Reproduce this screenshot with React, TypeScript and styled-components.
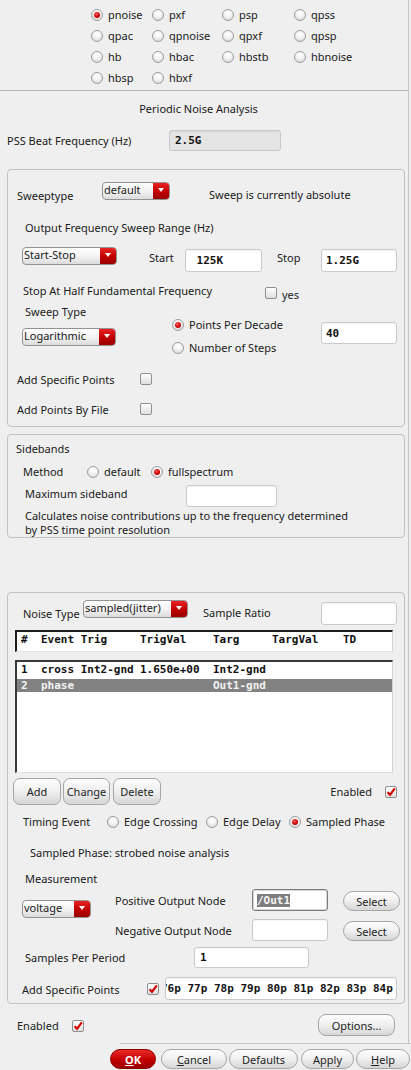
import React from "react";
import styled, { createGlobalStyle, css } from "styled-components";

const Global = createGlobalStyle`
  html, body { margin: 0; padding: 0; background: #efefef; }
  body { font-family: "Noto Sans", "DejaVu Sans", sans-serif; font-size: 11px; color: #202020; }
  * { box-sizing: border-box; }
`;

const Page = styled.div`
  width: 411px;
  height: 1070px;
  overflow: hidden;
  display: flex;
  flex-direction: column;
  background: #efefef;
`;

const Main = styled.div`
  width: 409px;
  height: 1043px;
  flex: none;
  border-right: 1px solid #c4c4c4;
  display: flex;
  flex-direction: column;
`;

const AnalysisGrid = styled.div`
  flex: none;
  height: 91px;
  border-bottom: 1px solid #bababa;
  padding: 4px 0 0 91px;
  display: grid;
  grid-template-columns: 61px 70px 72px auto;
  grid-auto-rows: 21px;
  align-items: center;
`;

const Title = styled.div`
  flex: none;
  margin-top: 10px;
  line-height: 15px;
  text-align: center;
  padding-right: 11px;
`;

const Row = styled.div<{ $mt?: number; $h: number; $pl?: number; $pr?: number; $cols?: string; $rows?: string }>`
  flex: none;
  display: grid;
  grid-template-columns: ${(p) => p.$cols ?? "auto"};
  ${(p) => p.$rows && css`grid-template-rows: ${p.$rows};`}
  align-items: start;
  margin-top: ${(p) => p.$mt ?? 0}px;
  height: ${(p) => p.$h}px;
  padding-left: ${(p) => p.$pl ?? 0}px;
  padding-right: ${(p) => p.$pr ?? 0}px;
`;

const Label = styled.div<{ $mt?: number; $lh?: number }>`
  margin-top: ${(p) => p.$mt ?? 0}px;
  line-height: ${(p) => p.$lh ?? 15}px;
  white-space: nowrap;
`;

const Group = styled.div<{ $mt: number; $h: number }>`
  flex: none;
  margin: ${(p) => p.$mt}px 0 0 7px;
  width: 398px;
  height: ${(p) => p.$h}px;
  border: 1px solid #c2c2c2;
  border-radius: 4px;
  display: flex;
  flex-direction: column;
`;

/* radio */
const RadioItem = styled.div<{ $mt?: number }>`
  display: flex;
  align-items: center;
  gap: 5px;
  height: 15px;
  white-space: nowrap;
  margin-top: ${(p) => p.$mt ?? 0}px;
`;

const RadioDot = styled.span<{ $on?: boolean }>`
  flex: none;
  width: 12px;
  height: 12px;
  border-radius: 50%;
  border: 1px solid #9d9d9d;
  background: radial-gradient(circle at 50% 30%, #ffffff 0%, #f5f5f5 40%, #d2d2d2 100%);
  display: flex;
  align-items: center;
  justify-content: center;
  &::after {
    content: "";
    width: 6px;
    height: 6px;
    border-radius: 50%;
    background: radial-gradient(circle at 40% 35%, #ff6060, #d00000 55%, #a80000);
    display: ${(p) => (p.$on ? "block" : "none")};
  }
`;

const RadioStack = styled.div`
  display: flex;
  flex-direction: column;
  gap: 8px;
`;

function Radio({ label, on, mt }: { label: string; on?: boolean; mt?: number }) {
  return (
    <RadioItem $mt={mt}>
      <RadioDot $on={on} />
      <span>{label}</span>
    </RadioItem>
  );
}

/* checkbox */
const CheckBox = styled.span<{ $mt?: number }>`
  display: block;
  width: 12px;
  height: 12px;
  margin-top: ${(p) => p.$mt ?? 0}px;
  border: 1px solid #8f8f8f;
  border-radius: 2px;
  background: linear-gradient(#ffffff, #dfdfdf);
  svg { display: block; overflow: visible; }
`;

function Check({ on, mt }: { on?: boolean; mt?: number }) {
  return (
    <CheckBox $mt={mt}>
      {on && (
        <svg width="10" height="10" viewBox="0 0 10 10">
          <path d="M1.6 5.2 L4 7.8 L8.8 1.4" fill="none" stroke="#d40000" strokeWidth="2.2" strokeLinejoin="miter" />
        </svg>
      )}
    </CheckBox>
  );
}

/* combo box */
const ComboBox = styled.div<{ $w: number; $mt?: number }>`
  display: flex;
  width: ${(p) => p.$w}px;
  height: 18px;
  margin-top: ${(p) => p.$mt ?? 0}px;
  border: 1px solid #929292;
  border-radius: 4px;
  overflow: hidden;
  background: linear-gradient(#ffffff, #f3f3f3 50%, #dcdcdc);
`;

const ComboText = styled.span`
  flex: 1;
  padding-left: 1px;
  line-height: 14px;
  white-space: nowrap;
  overflow: hidden;
`;

const ComboArrow = styled.span`
  flex: none;
  width: 16px;
  background: linear-gradient(#e82424, #c00000 55%, #980000);
  display: flex;
  align-items: center;
  justify-content: center;
  &::after {
    content: "";
    border-left: 3.5px solid transparent;
    border-right: 3.5px solid transparent;
    border-top: 4px solid #ffffff;
    margin-top: -2px;
  }
`;

function Combo({ text, w, mt }: { text: string; w: number; mt?: number }) {
  return (
    <ComboBox $w={w} $mt={mt}>
      <ComboText>{text}</ComboText>
      <ComboArrow />
    </ComboBox>
  );
}

const SpanRows = styled.div`
  grid-row: 1 / span 2;
`;

/* text field */
const Field = styled.div<{ $w: number; $h: number; $mt?: number; $pl?: number; $state?: "normal" | "disabled" | "focus" }>`
  width: ${(p) => p.$w}px;
  height: ${(p) => p.$h}px;
  margin-top: ${(p) => p.$mt ?? 0}px;
  padding-left: ${(p) => p.$pl ?? 4}px;
  border: 1px solid #c9c9c9;
  border-radius: 3px;
  background: #ffffff;
  box-shadow: inset 0 1px 1px rgba(0, 0, 0, 0.05);
  display: flex;
  align-items: center;
  overflow: hidden;
  white-space: pre;
  font-family: "DejaVu Sans Mono", monospace;
  font-weight: bold;
  font-size: 11px;
  color: #111;
  ${(p) =>
    p.$state === "disabled" &&
    css`
      background: #e4e4e4;
      border-color: #c8c8c8;
    `}
  ${(p) =>
    p.$state === "focus" &&
    css`
      border-color: #7d7d7d;
      box-shadow: inset 0 0 0 1px #d6d6d6;
    `}
`;

const Selected = styled.span`
  background: #7e7e7e;
  color: #f4f4f4;
`;

const Scrolled = styled.span`
  margin-left: -5px;
`;

/* buttons */
const Btn = styled.div<{ $w: number; $h: number; $r: number; $mt?: number; $ml?: number; $primary?: boolean }>`
  flex: none;
  width: ${(p) => p.$w}px;
  height: ${(p) => p.$h}px;
  margin-top: ${(p) => p.$mt ?? 0}px;
  margin-left: ${(p) => p.$ml ?? 0}px;
  border-radius: ${(p) => p.$r}px;
  border: 1px solid #a6a6a6;
  background: linear-gradient(#fdfdfd, #efefef 50%, #d6d6d6);
  display: flex;
  align-items: center;
  justify-content: center;
  white-space: nowrap;
  font-size: 11px;
  color: #1e1e1e;
  u { text-decoration: underline; }
  ${(p) =>
    p.$primary &&
    css`
      border-color: #8c0000;
      background: linear-gradient(#ea2a2a, #c40000 55%, #9c0000);
      color: #ffffff;
      font-weight: bold;
    `}
`;

const ButtonRow = styled.div`
  flex: none;
  display: flex;
  align-items: flex-start;
  gap: 2px;
  margin-top: 5px;
  height: 27px;
  padding: 0 7px 0 5px;
`;

const Trailing = styled.div`
  margin-left: auto;
  align-self: center;
  display: flex;
  align-items: center;
  gap: 13px;
`;

/* event list */
const ListHead = styled.div`
  flex: none;
  margin: 5px 0 0 7px;
  width: 378px;
  height: 22px;
  background: #ffffff;
  border-top: 2px solid #1c1c1c;
  border-left: 2px solid #1c1c1c;
  border-right: 1px solid #d4d4d4;
  border-bottom: 1px solid #e2e2e2;
  padding-top: 1px;
`;

const ListBody = styled.div`
  flex: none;
  margin: 8px 0 0 7px;
  width: 378px;
  height: 113px;
  background: #ffffff;
  border-top: 2px solid #3a3a3a;
  border-left: 2px solid #3a3a3a;
  border-right: 1px solid #d4d4d4;
  border-bottom: 1px solid #e2e2e2;
  padding-top: 1px;
  display: flex;
  flex-direction: column;
  gap: 3px;
`;

const EventRow = styled.div<{ $sel?: boolean }>`
  display: grid;
  grid-template-columns: 20px 99px 73px 59px 71px auto;
  padding-left: 4px;
  height: 13px;
  line-height: 13px;
  white-space: pre;
  font-family: "DejaVu Sans Mono", monospace;
  font-weight: bold;
  font-size: 11px;
  color: #111;
  ${(p) =>
    p.$sel &&
    css`
      background: #828282;
      color: #f2f2f2;
    `}
`;

const BottomBar = styled.div`
  flex: none;
  margin-left: 120px;
  height: 27px;
  border-top: 1px solid #c6c6c6;
`;

const DialogButtons = styled.div`
  display: flex;
  gap: 2px;
  margin: 5px 0 0 -10px;
`;

const EndCell = styled.div`
  justify-self: end;
`;

const analyses: [string, boolean][] = [
  ["pnoise", true], ["pxf", false], ["psp", false], ["qpss", false],
  ["qpac", false], ["qpnoise", false], ["qpxf", false], ["qpsp", false],
  ["hb", false], ["hbac", false], ["hbstb", false], ["hbnoise", false],
  ["hbsp", false], ["hbxf", false],
];

export default function App() {
  return (
    <Page>
      <Global />
      <Main>
        <AnalysisGrid>
          {analyses.map(([n, on]) => (
            <Radio key={n} label={n} on={on} />
          ))}
        </AnalysisGrid>

        <Title>Periodic Noise Analysis</Title>

        <Row $mt={14} $h={21} $pl={7} $cols="162px 112px">
          <Label $mt={3}>PSS Beat Frequency (Hz)</Label>
          <Field $w={112} $h={21} $pl={5} $state="disabled">2.5G</Field>
        </Row>

        <Group $mt={18} $h={258}>
          <Row $mt={12} $h={18} $pl={9} $cols="85px 107px auto">
            <Label $mt={6}>Sweeptype</Label>
            <Combo text="default" w={68} />
            <Label $mt={5}>Sweep is currently absolute</Label>
          </Row>
          <Row $mt={20} $h={15} $pl={17}>
            <Label>Output Frequency Sweep Range (Hz)</Label>
          </Row>
          <Row $mt={12} $h={25} $pl={14} $cols="127px 36px 92px 44px 76px">
            <Combo text="Start-Stop" w={95} />
            <Label $mt={3}>Start</Label>
            <Field $w={77} $h={23} $mt={2}>{" 125K"}</Field>
            <Label $mt={3}>Stop</Label>
            <Field $w={76} $h={23} $mt={2}>1.25G</Field>
          </Row>
          <Row $mt={11} $h={16} $pl={15} $cols="242px 17px auto">
            <Label>Stop At Half Fundamental Frequency</Label>
            <Check mt={4} />
            <Label $mt={4}>yes</Label>
          </Row>
          <Row $mt={5} $h={13} $pl={17}>
            <Label>Sweep Type</Label>
          </Row>
          <Row $h={38} $pl={14} $cols="150px 149px 76px">
            <Combo text="Logarithmic" w={94} mt={11} />
            <RadioStack>
              <Radio label="Points Per Decade" on />
              <Radio label="Number of Steps" />
            </RadioStack>
            <Field $w={76} $h={22} $mt={5}>40</Field>
          </Row>
          <Row $mt={17} $h={15} $pl={9} $cols="123px auto">
            <Label>Add Specific Points</Label>
            <Check mt={1} />
          </Row>
          <Row $mt={15} $h={15} $pl={9} $cols="123px auto">
            <Label>Add Points By File</Label>
            <Check mt={1} />
          </Row>
        </Group>

        <Group $mt={7} $h={104}>
          <Row $mt={6} $h={15} $pl={8}>
            <Label>Sidebands</Label>
          </Row>
          <Row $mt={8} $h={15} $pl={15} $cols="64px 64px auto">
            <Label>Method</Label>
            <Radio label="default" />
            <Radio label="fullspectrum" on />
          </Row>
          <Row $mt={6} $h={22} $pl={17} $cols="161px 91px">
            <Label $mt={1}>Maximum sideband</Label>
            <Field $w={91} $h={22} />
          </Row>
          <Row $mt={2} $h={28} $pl={17}>
            <Label $lh={14}>
              Calculates noise contributions up to the frequency determined
              <br />
              by PSS time point resolution
            </Label>
          </Row>
        </Group>

        <Group $mt={54} $h={412}>
          <Row $mt={7} $h={25} $pl={15} $cols="60px 120px 118px 76px">
            <Label $mt={6}>Noise Type</Label>
            <Combo text="sampled(jitter)" w={105} />
            <Label $mt={5}>Sample Ratio</Label>
            <Field $w={76} $h={23} $mt={2} />
          </Row>
          <ListHead>
            <EventRow>
              <span>#</span>
              <span>Event Trig</span>
              <span>TrigVal</span>
              <span>Targ</span>
              <span>TargVal</span>
              <span>TD</span>
            </EventRow>
          </ListHead>
          <ListBody>
            <EventRow>
              <span>1</span>
              <span>cross Int2-gnd</span>
              <span>1.650e+00</span>
              <span>Int2-gnd</span>
              <span />
              <span />
            </EventRow>
            <EventRow $sel>
              <span>2</span>
              <span>phase</span>
              <span />
              <span>Out1-gnd</span>
              <span />
              <span />
            </EventRow>
          </ListBody>
          <ButtonRow>
            <Btn $w={48} $h={27} $r={7}>Add</Btn>
            <Btn $w={47} $h={27} $r={7}>Change</Btn>
            <Btn $w={48} $h={27} $r={7} $ml={1}>Delete</Btn>
            <Trailing>
              <span>Enabled</span>
              <Check on />
            </Trailing>
          </ButtonRow>
          <Row $mt={9} $h={15} $pl={15} $cols="84px 99px 83px auto">
            <Label>Timing Event</Label>
            <Radio label="Edge Crossing" />
            <Radio label="Edge Delay" />
            <Radio label="Sampled Phase" on />
          </Row>
          <Row $mt={16} $h={15} $pl={22}>
            <Label>Sampled Phase: strobed noise analysis</Label>
          </Row>
          <Row $mt={11} $h={15} $pl={17}>
            <Label>Measurement</Label>
          </Row>
          <Row $mt={3} $h={52} $pl={14} $cols="93px 137px 91px 57px" $rows="30px 22px">
            <SpanRows>
              <Combo text="voltage" w={69} mt={11} />
            </SpanRows>
            <Label $mt={4}>Positive Output Node</Label>
            <Field $w={76} $h={22} $state="focus">
              <Selected>/Out1</Selected>
            </Field>
            <Btn $w={57} $h={20} $r={10} $mt={2}>Select</Btn>
            <Label $mt={4}>Negative Output Node</Label>
            <Field $w={76} $h={22} />
            <Btn $w={57} $h={20} $r={10} $mt={2}>Select</Btn>
          </Row>
          <Row $mt={6} $h={21} $pl={17} $cols="169px 115px">
            <Label $mt={3}>Samples Per Period</Label>
            <Field $w={115} $h={21} $pl={5}>1</Field>
          </Row>
          <Row $mt={9} $h={23} $pl={14} $cols="125px 18px 232px">
            <Label $mt={5}>Add Specific Points</Label>
            <Check on mt={6} />
            <Field $w={232} $h={23} $pl={0}>
              <Scrolled>76p 77p 78p 79p 80p 81p 82p 83p 84p 85p 86p</Scrolled>
            </Field>
          </Row>
        </Group>

        <Row $mt={10} $h={22} $pl={17} $pr={13} $cols="55px auto 1fr">
          <Label $mt={4}>Enabled</Label>
          <Check on mt={6} />
          <EndCell>
            <Btn $w={77} $h={22} $r={8}>Options...</Btn>
          </EndCell>
        </Row>
      </Main>

      <BottomBar>
        <DialogButtons>
          <Btn $w={46} $h={20} $r={10} $primary>
            <span><u>O</u>K</span>
          </Btn>
          <Btn $w={66} $h={20} $r={10} $ml={3}>
            <span><u>C</u>ancel</span>
          </Btn>
          <Btn $w={69} $h={20} $r={10}>Defaults</Btn>
          <Btn $w={53} $h={20} $r={10} $ml={1}>Apply</Btn>
          <Btn $w={54} $h={20} $r={10}>
            <span><u>H</u>elp</span>
          </Btn>
        </DialogButtons>
      </BottomBar>
    </Page>
  );
}
